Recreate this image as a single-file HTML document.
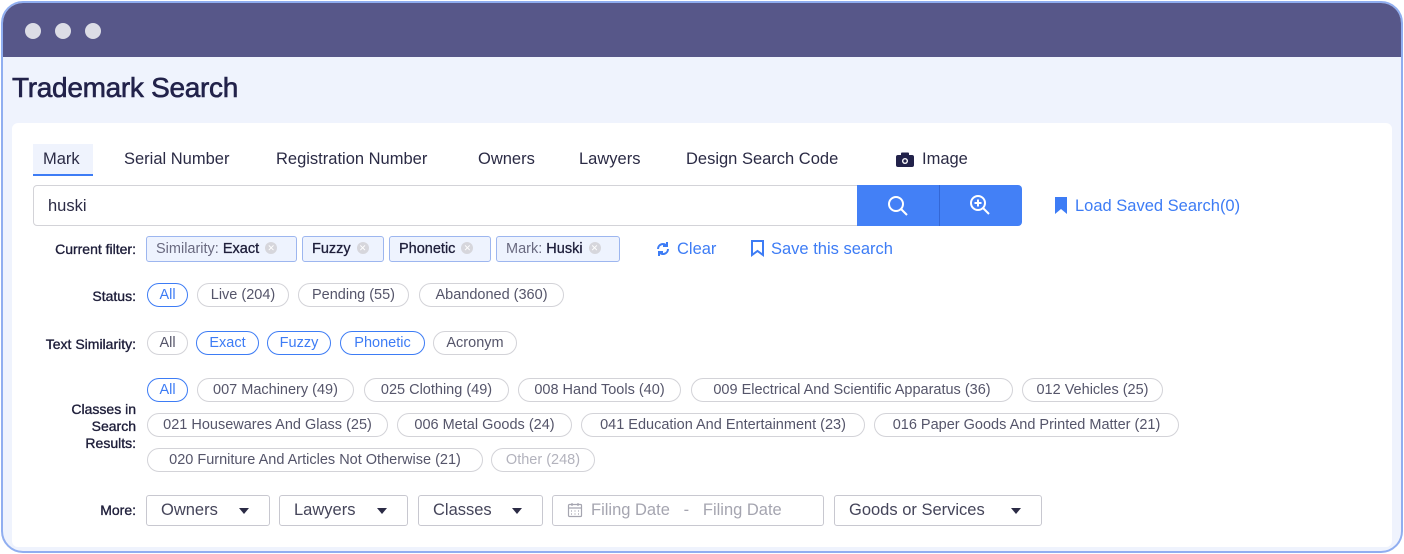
<!DOCTYPE html>
<html><head><style>
*{box-sizing:border-box;margin:0;padding:0}
body{width:1404px;height:554px;background:#fff;font-family:"Liberation Sans",sans-serif;position:relative;overflow:hidden}
.frame{position:absolute;left:1px;top:1px;width:1402px;height:552px;border:2px solid #90aef0;border-radius:22px;background:#eff3fd;overflow:hidden}
.bar{position:absolute;left:0;top:0;right:0;height:54px;background:#575789}
.dot{position:absolute;top:20px;width:16px;height:16px;border-radius:50%;background:#dcdde6}
.a{position:absolute;white-space:nowrap}
.card{position:absolute;left:12px;top:123px;width:1380px;height:424px;background:#fff;border-radius:6px}
.tab{position:absolute;top:150px;font-size:16.5px;color:#2b2b45}
.chip{position:absolute;height:24px;border:1px solid #d3d3d8;border-radius:12px;font-size:14.5px;color:#55556a;text-align:center;line-height:23px}
.chip.b{border-color:#3d7cf5;color:#3d7cf5;border-width:1.5px;line-height:22px}
.chip.g{color:#b3b3bd}
.f{position:absolute;top:236px;height:26px;border:1px solid #9db6ef;background:#eef3fe;border-radius:3px;font-size:14.5px;color:#6a6a80;line-height:25px;padding-left:9px}
.f b{color:#1e1e3a;font-weight:normal;-webkit-text-stroke:0.3px #1e1e3a}
.x{display:inline-block;width:12px;height:12px;border-radius:50%;background:#d6d6dc;color:#fff;font-size:9px;line-height:12px;text-align:center;vertical-align:middle;margin-left:6px;position:relative;top:-1px}
.lbl{position:absolute;right:1268px;font-size:14px;color:#1e1e3a;text-align:right;-webkit-text-stroke:0.35px #1e1e3a}
.dd{position:absolute;top:495px;height:31px;border:1px solid #c8c8d0;border-radius:3px;font-size:16.5px;color:#45455a;line-height:29px;padding-left:14px}
.tri{position:absolute;right:20px;top:12px;width:0;height:0;border-left:5px solid transparent;border-right:5px solid transparent;border-top:6px solid #2b2b45}
</style></head><body>
<div class="frame">
<div class="bar"></div>
<div class="dot" style="left:22px"></div><div class="dot" style="left:52px"></div><div class="dot" style="left:82px"></div>
</div>
<div class="a" style="left:12px;top:72px;font-size:28px;color:#22224a;-webkit-text-stroke:0.6px #22224a;letter-spacing:-0.3px">Trademark Search</div>
<div class="card"></div>
<div class="a" style="left:33px;top:144px;width:60px;height:32px;background:#eff3fd;border-bottom:2px solid #3d7cf5"></div>
<div class="tab" style="left:43px">Mark</div>
<div class="tab" style="left:124px">Serial Number</div>
<div class="tab" style="left:276px">Registration Number</div>
<div class="tab" style="left:478px">Owners</div>
<div class="tab" style="left:579px">Lawyers</div>
<div class="tab" style="left:686px">Design Search Code</div>
<svg class="a" style="left:896px;top:152px" width="18" height="15" viewBox="0 0 18 15"><rect x="0" y="3" width="18" height="12" rx="2" fill="#22224a"/><rect x="5" y="0.5" width="8" height="4" rx="1" fill="#22224a"/><circle cx="9" cy="9" r="3" fill="#fff"/><circle cx="9" cy="9" r="1.6" fill="#22224a"/></svg>
<div class="tab" style="left:922px">Image</div>
<div class="a" style="left:33px;top:185px;width:826px;height:41px;border:1px solid #d3d3d8;border-radius:4px 0 0 4px"></div>
<div class="a" style="left:48px;top:197px;font-size:16.5px;color:#2b2b45">huski</div>
<div class="a" style="left:857px;top:185px;width:165px;height:41px;background:#4380f6;border-radius:0 4px 4px 0"></div>
<div class="a" style="left:939px;top:185px;width:1px;height:41px;background:#3367d6"></div>
<svg class="a" style="left:886px;top:194px" width="24" height="24" viewBox="0 0 24 24" fill="none" stroke="#fff" stroke-width="2"><circle cx="10" cy="10" r="7"/><path d="M15 15l6 6"/></svg>
<svg class="a" style="left:968px;top:193px" width="24" height="24" viewBox="0 0 24 24" fill="none" stroke="#fff" stroke-width="2"><circle cx="10" cy="10" r="7"/><path d="M15 15l6 6M10 6.5v7M6.5 10h7"/></svg>
<svg class="a" style="left:1055px;top:197px" width="12" height="17" viewBox="0 0 12 17"><path d="M0 0h12v17l-6-5-6 5z" fill="#3d7cf5"/></svg>
<div class="a" style="left:1075px;top:197px;font-size:16.5px;color:#3d7cf5">Load Saved Search(0)</div>
<div class="lbl" style="top:241px">Current filter:</div>
<div class="f" style="left:146px;width:151px">Similarity: <b>Exact</b><span class="x">✕</span></div>
<div class="f" style="left:302px;width:82px"><b>Fuzzy</b><span class="x">✕</span></div>
<div class="f" style="left:389px;width:102px"><b>Phonetic</b><span class="x">✕</span></div>
<div class="f" style="left:496px;width:124px">Mark: <b>Huski</b><span class="x">✕</span></div>
<svg class="a" style="left:655px;top:241px" width="16" height="16" viewBox="0 0 16 16" fill="none" stroke="#3d7cf5" stroke-width="2"><path d="M13 8a5 5 0 0 1-9 3M3 8a5 5 0 0 1 9-3"/><path d="M12 1v4H8M4 15v-4h4" /></svg>
<div class="a" style="left:677px;top:240px;font-size:16.5px;color:#3d7cf5">Clear</div>
<svg class="a" style="left:751px;top:240px" width="13" height="17" viewBox="0 0 13 17" fill="none" stroke="#3d7cf5" stroke-width="2"><path d="M1 1h11v14l-5.5-4-5.5 4z"/></svg>
<div class="a" style="left:771px;top:240px;font-size:16.5px;color:#3d7cf5">Save this search</div>
<div class="lbl" style="top:288px">Status:</div>
<div class="chip b" style="left:147px;top:283px;width:41px">All</div>
<div class="chip" style="left:197px;top:283px;width:92px">Live (204)</div>
<div class="chip" style="left:298px;top:283px;width:111px">Pending (55)</div>
<div class="chip" style="left:419px;top:283px;width:145px">Abandoned (360)</div>
<div class="lbl" style="top:336px">Text Similarity:</div>
<div class="chip" style="left:147px;top:331px;width:41px">All</div>
<div class="chip b" style="left:196px;top:331px;width:63px">Exact</div>
<div class="chip b" style="left:267px;top:331px;width:64px">Fuzzy</div>
<div class="chip b" style="left:340px;top:331px;width:85px">Phonetic</div>
<div class="chip" style="left:433px;top:331px;width:84px">Acronym</div>
<div class="lbl" style="top:401px;line-height:17px">Classes in<br>Search<br>Results:</div>
<div class="chip b" style="left:147px;top:378px;width:41px">All</div>
<div class="chip" style="left:197px;top:378px;width:157px">007 Machinery (49)</div>
<div class="chip" style="left:364px;top:378px;width:145px">025 Clothing (49)</div>
<div class="chip" style="left:518px;top:378px;width:163px">008 Hand Tools (40)</div>
<div class="chip" style="left:691px;top:378px;width:322px">009 Electrical And Scientific Apparatus (36)</div>
<div class="chip" style="left:1022px;top:378px;width:141px">012 Vehicles (25)</div>
<div class="chip" style="left:147px;top:413px;width:241px">021 Housewares And Glass (25)</div>
<div class="chip" style="left:397px;top:413px;width:175px">006 Metal Goods (24)</div>
<div class="chip" style="left:581px;top:413px;width:284px">041 Education And Entertainment (23)</div>
<div class="chip" style="left:874px;top:413px;width:305px">016 Paper Goods And Printed Matter (21)</div>
<div class="chip" style="left:147px;top:448px;width:336px">020 Furniture And Articles Not Otherwise (21)</div>
<div class="chip g" style="left:491px;top:448px;width:104px">Other (248)</div>
<div class="lbl" style="top:502px">More:</div>
<div class="dd" style="left:146px;width:124px">Owners<span class="tri"></span></div>
<div class="dd" style="left:279px;width:129px">Lawyers<span class="tri"></span></div>
<div class="dd" style="left:418px;width:125px">Classes<span class="tri"></span></div>
<div class="dd" style="left:552px;width:272px;color:#a5a5b0;padding-left:38px">Filing Date &nbsp; - &nbsp; Filing Date</div>
<svg class="a" style="left:567px;top:502px" width="16" height="16" viewBox="0 0 16 16" fill="none" stroke="#a5a5b0" stroke-width="1.2"><rect x="1.5" y="2.5" width="13" height="12" rx="1"/><path d="M1.5 6h13M5 1v3M11 1v3M4 9h1M7.5 9h1M11 9h1M4 12h1M7.5 12h1M11 12h1"/></svg>
<div class="dd" style="left:834px;width:208px">Goods or Services<span class="tri"></span></div>
</body></html>
